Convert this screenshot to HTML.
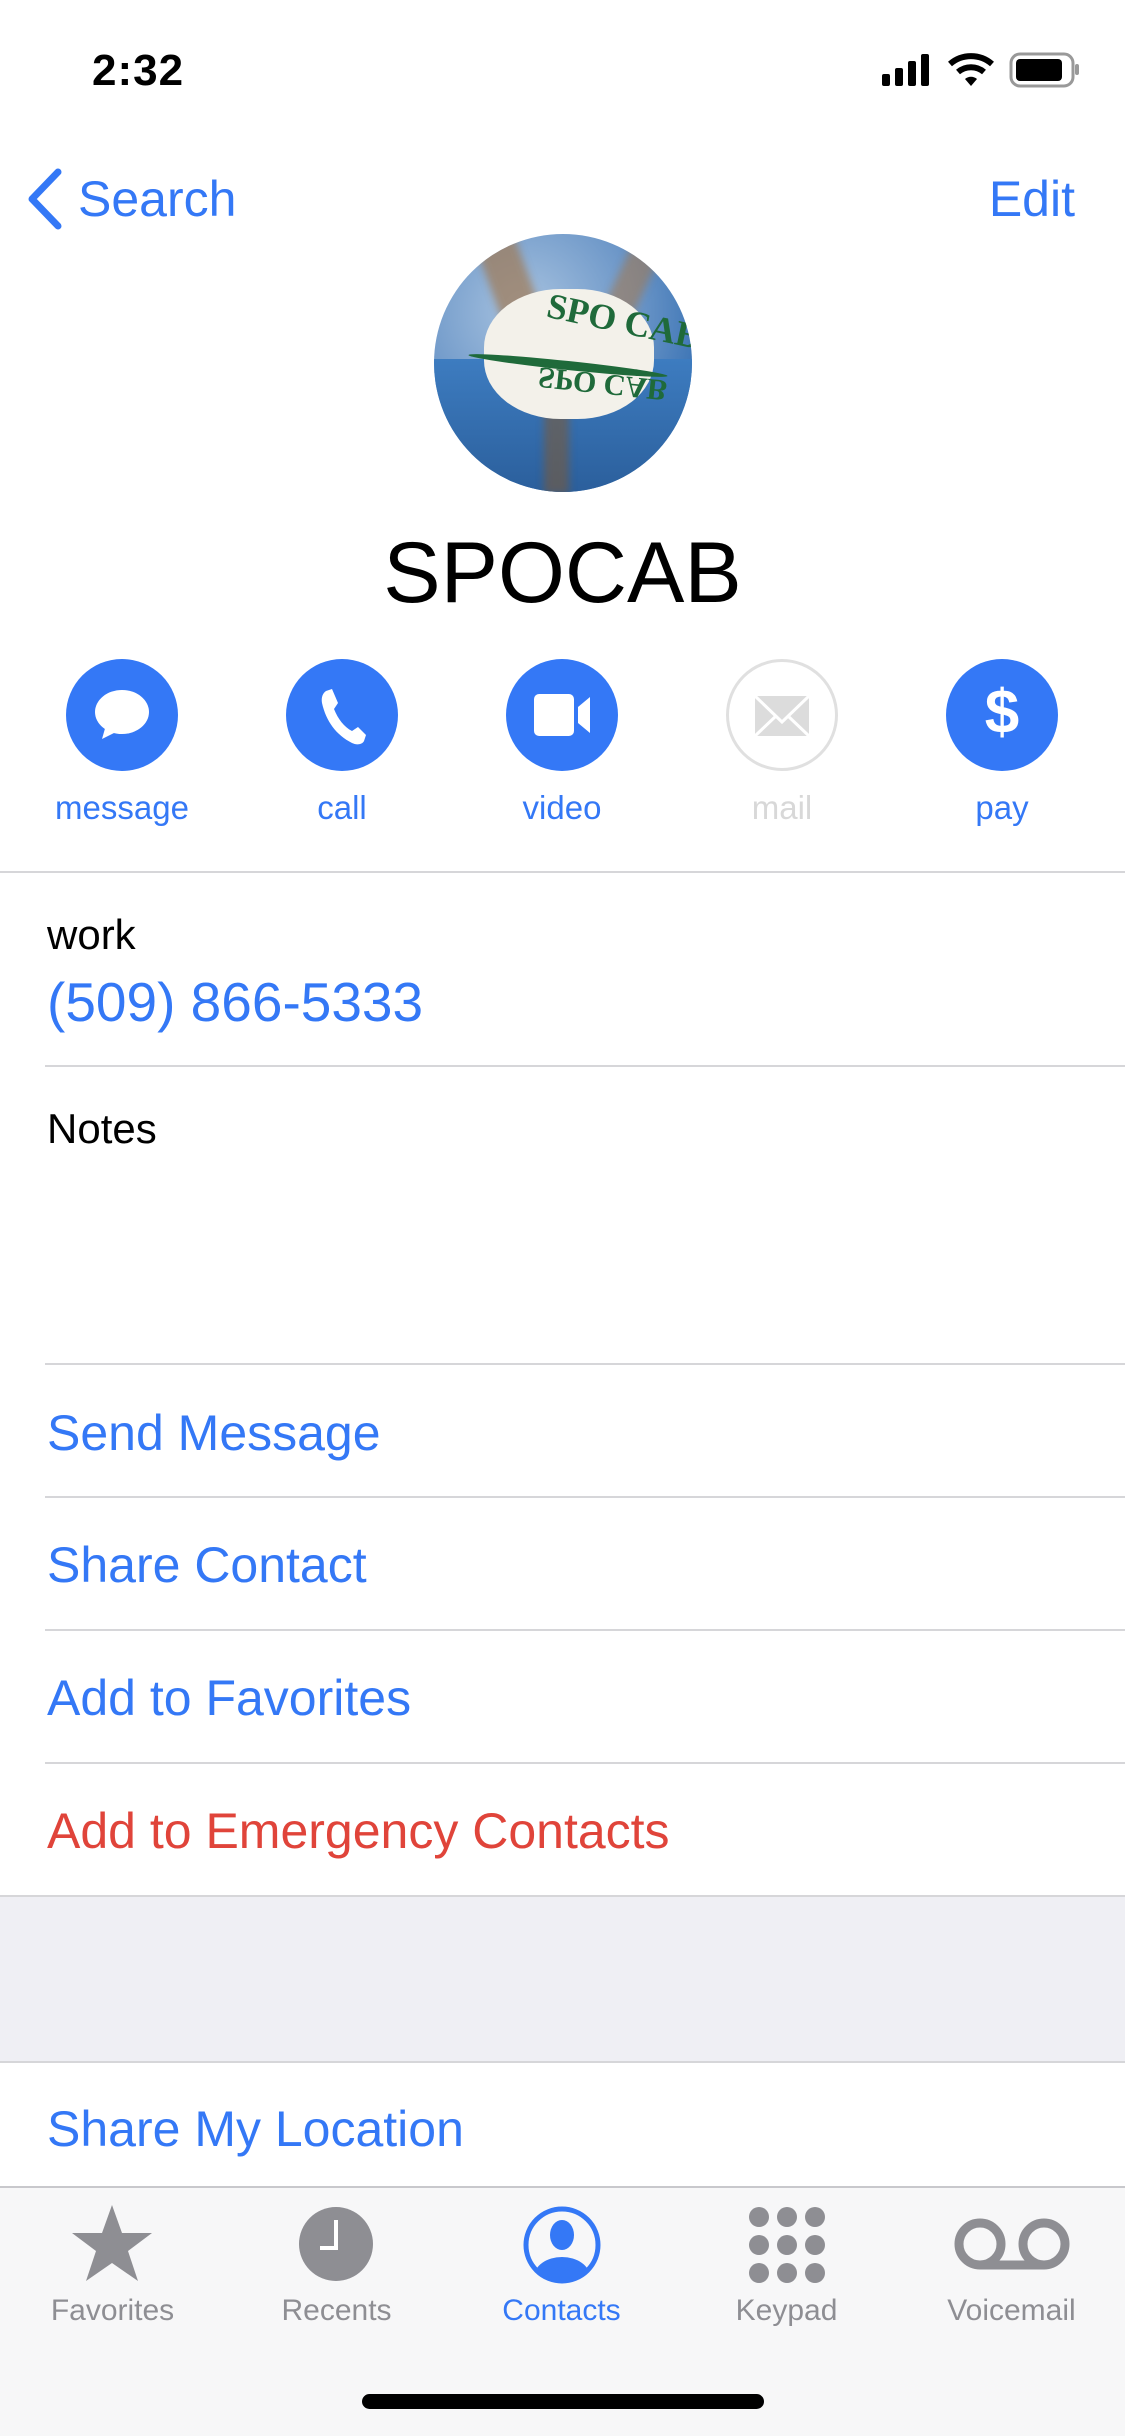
<!DOCTYPE html>
<html><head><meta charset="utf-8"><style>
*{margin:0;padding:0;box-sizing:border-box}
body{width:1125px;height:2436px;background:#fff;position:relative;overflow:hidden;font-family:"Liberation Sans",sans-serif}
.a{position:absolute;white-space:nowrap}
.blue{color:#3478f6}
.line{position:absolute;height:2px;background:#d6d6d9;right:0}
.row{position:absolute;left:47px;font-size:50px;line-height:1;color:#3478f6}
.circ{position:absolute;width:112px;height:112px;border-radius:50%;background:#3478f6;top:659px}
.lab{position:absolute;top:789px;width:220px;text-align:center;font-size:33px;color:#3478f6}
.tl{position:absolute;top:2294px;width:225px;text-align:center;font-size:30px;color:#8e8e93}
</style></head><body>
<div class="a" style="left:92px;top:46px;font-size:44px;font-weight:bold;letter-spacing:1px">2:32</div>
<svg class="a" style="left:880px;top:52px" width="200" height="36" viewBox="0 0 200 36">
<rect x="2" y="22" width="8" height="12" rx="2"/><rect x="15" y="16" width="8" height="18" rx="2"/><rect x="28" y="9" width="8" height="25" rx="2"/><rect x="41" y="2" width="8" height="32" rx="2"/>
<path d="M70 12 A32 32 0 0 1 112 12" stroke="#000" stroke-width="6" fill="none"/><path d="M78 20 A20 20 0 0 1 104 20" stroke="#000" stroke-width="6" fill="none"/><path d="M85 27 L91 34 L97 27 A9 9 0 0 0 85 27Z"/>
<rect x="131" y="2" width="62" height="32" rx="9" fill="none" stroke="#999" stroke-width="3"/><rect x="136" y="7" width="46" height="22" rx="4"/><rect x="195" y="12" width="4" height="11" rx="2" fill="#999"/>
</svg>
<svg class="a" style="left:24px;top:168px" width="40" height="62" viewBox="0 0 40 62"><path d="M34 4 L8 31 L34 58" stroke="#3478f6" stroke-width="7" fill="none" stroke-linecap="round" stroke-linejoin="round"/></svg>
<div class="a blue" style="left:78px;top:170px;font-size:50px">Search</div>
<div class="a blue" style="right:50px;top:170px;font-size:50px">Edit</div>
<div class="a" style="left:434px;top:234px;width:258px;height:258px;border-radius:50%;overflow:hidden;background:radial-gradient(circle at 35% 30%,#a8c3e0,#6d97c8 45%,#2f6bb0 80%)">
<div class="a" style="left:60px;top:0;width:40px;height:120px;background:#a07a55;opacity:.7;transform:rotate(-20deg);filter:blur(4px)"></div>
<div class="a" style="left:170px;top:10px;width:30px;height:130px;background:#a07a55;opacity:.6;transform:rotate(25deg);filter:blur(4px)"></div>
<div class="a" style="left:0;top:125px;width:258px;height:133px;background:linear-gradient(#3d7cc0,#2b5f9c)"></div>
<div class="a" style="left:110px;top:160px;width:25px;height:100px;background:#7a5a3a;opacity:.6;filter:blur(4px)"></div>
<div class="a" style="left:50px;top:55px;width:170px;height:130px;border-radius:45%;background:#f3f1ea"></div>
<div class="a" style="left:34px;top:127px;width:200px;height:9px;border-radius:50%;background:#1f6a3a;transform:rotate(6deg)"></div>
<div class="a" style="left:112px;top:66px;font-family:'Liberation Serif',serif;font-weight:bold;font-size:36px;color:#1f6a3a;transform:rotate(12deg)">SPO CAB</div>
<div class="a" style="left:104px;top:132px;font-family:'Liberation Serif',serif;font-weight:bold;font-size:30px;color:#1f6a3a;transform:scaleY(-1) rotate(-6deg)">SPO CAB</div>
</div>
<div class="a" style="left:0;width:1125px;text-align:center;top:524px;font-size:86px">SPOCAB</div>
<div class="circ" style="left:66px"><svg width="112" height="112" viewBox="0 0 112 112"><ellipse cx="56" cy="53" rx="27" ry="22" fill="#fff"/><path d="M40 66 L36 80 L52 72Z" fill="#fff"/></svg></div>
<div class="circ" style="left:286px"><svg width="112" height="112" viewBox="0 0 112 112"><path d="M40 32 L46 30 L52 44 L48 50 C52 60 58 68 66 72 L72 68 L80 76 L78 82 C76 86 70 86 66 84 C50 76 40 62 36 44 C35 38 37 34 40 32Z" fill="#fff"/></svg></div>
<div class="circ" style="left:506px"><svg width="112" height="112" viewBox="0 0 112 112"><rect x="28" y="35" width="40" height="42" rx="5" fill="#fff"/><path d="M72 48 L84 38 L84 74 L72 64Z" fill="#fff"/></svg></div>
<div class="circ" style="left:726px;background:#fff;border:3px solid #e0e0e0"><svg width="106" height="106" viewBox="0 0 106 106"><rect x="26" y="34" width="54" height="40" fill="#dcdcdc"/><path d="M26 34 L53 60 L80 34 M26 74 L47 54 M80 74 L59 54" stroke="#fff" stroke-width="3" fill="none"/></svg></div>
<div class="circ" style="left:946px"><div class="a" style="left:0;width:112px;top:18px;text-align:center;color:#fff;font-size:62px;font-weight:bold">$</div></div>
<div class="lab" style="left:12px">message</div>
<div class="lab" style="left:232px">call</div>
<div class="lab" style="left:452px">video</div>
<div class="lab" style="left:672px;color:#d8d8d8">mail</div>
<div class="lab" style="left:892px">pay</div>
<div class="line" style="top:871px;left:0"></div>
<div class="a" style="left:47px;top:911px;font-size:42px">work</div>
<div class="row" style="top:975px;font-size:55px">(509) 866-5333</div>
<div class="line" style="top:1065px;left:45px"></div>
<div class="a" style="left:47px;top:1105px;font-size:42px">Notes</div>
<div class="line" style="top:1363px;left:45px"></div>
<div class="row" style="top:1408px">Send Message</div>
<div class="line" style="top:1496px;left:45px"></div>
<div class="row" style="top:1540px">Share Contact</div>
<div class="line" style="top:1629px;left:45px"></div>
<div class="row" style="top:1673px">Add to Favorites</div>
<div class="line" style="top:1762px;left:45px"></div>
<div class="row" style="top:1806px;color:#e0443a">Add to Emergency Contacts</div>
<div class="a" style="left:0;top:1895px;width:1125px;height:168px;background:#efeff4;border-top:2px solid #d6d6d9;border-bottom:2px solid #d6d6d9"></div>
<div class="row" style="top:2104px">Share My Location</div>
<div class="a" style="left:0;top:2186px;width:1125px;height:250px;background:#f7f7f8;border-top:2px solid #c8c8cc"></div>
<svg class="a" style="left:70px;top:2203px" width="84" height="82" viewBox="0 0 84 82"><path d="M42 2 L52 30 L82 30 L58 48 L68 78 L42 60 L16 78 L26 48 L2 30 L32 30Z" fill="#8e8e93"/></svg>
<svg class="a" style="left:298px;top:2206px" width="76" height="76" viewBox="0 0 76 76"><circle cx="38" cy="38" r="37" fill="#8e8e93"/><path d="M38 14 L38 42 L22 42" stroke="#fff" stroke-width="4" fill="none"/></svg>
<svg class="a" style="left:522px;top:2205px" width="80" height="80" viewBox="0 0 80 80"><defs><clipPath id="c"><circle cx="40" cy="40" r="34"/></clipPath></defs><circle cx="40" cy="40" r="36" stroke="#3478f6" stroke-width="5" fill="none"/><ellipse cx="40" cy="30" rx="12" ry="15" fill="#3478f6"/><ellipse cx="40" cy="72" rx="28" ry="20" fill="#3478f6" clip-path="url(#c)"/></svg>
<svg class="a" style="left:749px;top:2207px" width="76" height="76" viewBox="0 0 76 76"><g fill="#8e8e93"><circle cx="10" cy="10" r="10"/><circle cx="38" cy="10" r="10"/><circle cx="66" cy="10" r="10"/><circle cx="10" cy="38" r="10"/><circle cx="38" cy="38" r="10"/><circle cx="66" cy="38" r="10"/><circle cx="10" cy="66" r="10"/><circle cx="38" cy="66" r="10"/><circle cx="66" cy="66" r="10"/></g></svg>
<svg class="a" style="left:954px;top:2218px" width="116" height="54" viewBox="0 0 116 54"><g stroke="#8e8e93" stroke-width="9" fill="none"><circle cx="26" cy="26" r="21"/><circle cx="90" cy="26" r="21"/><path d="M26 47 L90 47"/></g></svg>
<div class="tl" style="left:0">Favorites</div>
<div class="tl" style="left:224px">Recents</div>
<div class="tl" style="left:449px;color:#3478f6">Contacts</div>
<div class="tl" style="left:674px">Keypad</div>
<div class="tl" style="left:899px">Voicemail</div>
<div class="a" style="left:362px;top:2394px;width:402px;height:15px;border-radius:8px;background:#000"></div>
</body></html>
